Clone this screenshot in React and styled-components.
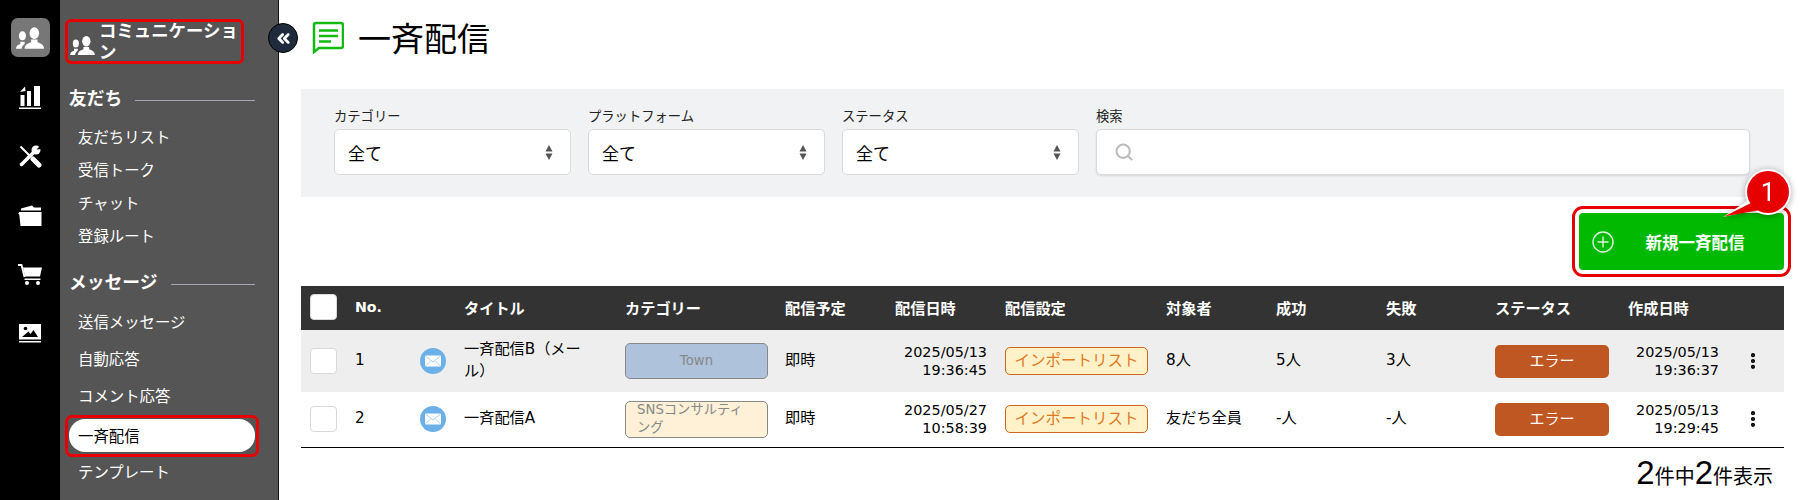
import styled, { createGlobalStyle } from 'styled-components'
import { ChevronsLeft, EllipsisVertical, Search } from 'lucide-react'

const GlobalStyle = createGlobalStyle`
  html, body {
    margin: 0;
    background: #fff;
  }
  body {
    font-family: "DejaVu Sans", "Noto Sans CJK JP", sans-serif;
    color: #000;
  }
  * {
    box-sizing: border-box;
  }
`

const Page = styled.div`
  display: flex;
  height: 500px;
  overflow: hidden;
`

const Rail = styled.nav`
  width: 60px;
  flex: none;
  background: #000;
  padding-top: 8px;
  display: flex;
  flex-flow: column;
  align-items: center;
`

const RailSlot = styled.div`
  height: 59.2px;
  display: flex;
  align-items: center;
  justify-content: center;
`

const RailButton = styled.div`
  width: 39px;
  height: 39px;
  display: flex;
  align-items: center;
  justify-content: center;
  border-radius: 7px;
  color: #fff;
  background: ${props => (props.$active ? '#777' : 'transparent')};
`

const Sidebar = styled.aside`
  position: relative;
  width: 219px;
  flex: none;
  background: #555;
  border-right: 1px solid #111;
  color: #fff;
`

const CollapseButton = styled.div`
  position: absolute;
  top: 23px;
  right: -20px;
  width: 30px;
  height: 30px;
  border-radius: 50%;
  background: #1f2a3c;
  border: 1px solid #000;
  color: #fff;
  display: flex;
  align-items: center;
  justify-content: center;
`

const SectionTitle = styled.div`
  margin: 19px 34px 0 5px;
  height: 45px;
  border: 3px solid #e60000;
  border-radius: 6px;
  display: flex;
  align-items: center;
  gap: 4px;
  padding-left: 2px;
  font-size: 17.4px;
  font-weight: 700;
  line-height: 21px;
`

const SectionIcon = styled.div`
  flex: none;
  display: flex;
  margin-top: 7px;
`

const GroupHeading = styled.div`
  margin: ${props => props.$top}px 23px ${props => props.$bottom}px 9px;
  height: 24px;
  display: flex;
  align-items: center;
  gap: 13px;
  font-size: 17.8px;
  font-weight: 700;
  line-height: 24px;

  &::after {
    content: "";
    flex: 1;
    height: 1px;
    margin-top: 2px;
    background: #a8a8b4;
  }
`

const NavItem = styled.div`
  position: relative;
  margin-left: 9px;
  width: 186px;
  height: ${props => props.$height}px;
  padding: 0 0 2px 9px;
  display: flex;
  align-items: center;
  font-size: 15.4px;

  ${props => props.$active && `
    height: 33px;
    margin-top: 5px;
    margin-bottom: 1px;
    color: #000;
    background: #fff;
    border-radius: 16px;

    &::after {
      content: "";
      position: absolute;
      inset: -4px -4px -5px;
      border: 3px solid #e60000;
      border-radius: 7px;
    }
  `}
`

const Main = styled.main`
  flex: 1;
  min-width: 0;
  padding: 0 18px 0 22px;
`

const PageHeader = styled.header`
  height: 89px;
  padding: 0 0 13px 11px;
  display: flex;
  align-items: center;
  gap: 14px;
`

const PageTitle = styled.h1`
  margin: 4px 0 0;
  font-size: 33px;
  font-weight: 400;
  line-height: 40px;
`

const FilterPanel = styled.section`
  height: 108px;
  padding: 18px 34px 0 33px;
  background: #f1f2f4;
  display: flex;
  gap: 17px;
`

const Field = styled.label`
  display: block;
  width: ${props => props.$width}px;
`

const FieldLabel = styled.div`
  height: 22px;
  font-size: 13.3px;
  line-height: 20px;
  color: #222;
`

const SelectBox = styled.div`
  position: relative;
  height: 46px;
  background: #fff;
  border: 1px solid #d9dade;
  border-radius: 5px;
  display: flex;
  align-items: center;
  padding-left: 13px;
  font-size: 17px;
`

const SortArrows = styled.svg`
  position: absolute;
  right: 17px;
  top: 15px;
`

const SearchBox = styled(SelectBox)`
  padding-left: 17px;
  color: #bbb;
  box-shadow: 0 1px 2px rgba(0, 0, 0, .12);
`

const ActionRow = styled.div`
  height: 89px;
  padding-top: 16px;
  display: flex;
  justify-content: flex-end;
`

const CreateButton = styled.div`
  position: relative;
  width: 205px;
  height: 57px;
  padding-left: 13px;
  display: flex;
  align-items: center;
  background: #00b900;
  border-radius: 4px;
  outline: 3px solid #e60000;
  outline-offset: 4px;
  color: #fff;
  font-size: 16.5px;
  font-weight: 700;
`

const CreateLabel = styled.span`
  flex: 1;
  text-align: center;
  margin-right: 8px;
`

const Callout = styled.svg`
  position: absolute;
  left: 136px;
  top: -48px;
  filter: drop-shadow(0 1px 3px rgba(0, 0, 0, .35));
`

const columns = '45px 65px 44px 161px 160px 110px 110px 161px 110px 110px 109px 133px 117px 38px'

const TableHead = styled.div`
  display: grid;
  grid-template-columns: ${columns};
  align-items: center;
  height: 44px;
  padding: 0 0 2px 9px;
  background: #333;
  color: #fff;
  font-size: 15.2px;
  font-weight: 700;
`

const NumberHead = styled.div`
  font-size: 14.2px;
`

const TableRow = styled.div`
  display: grid;
  grid-template-columns: ${columns};
  align-items: center;
  height: ${props => props.$height}px;
  padding-left: 9px;
  background: ${props => (props.$shaded ? '#eee' : '#fff')};
  font-size: 15.2px;
  line-height: 22px;
`

const TableEnd = styled.div`
  height: 1px;
  margin-top: 1px;
  background: #000;
`

const Checkbox = styled.div`
  width: 27px;
  height: 26px;
  background: #fff;
  border: 1px solid #d7d9de;
  border-radius: 4px;
`

const PlainCell = styled.div`
  margin-top: -2px;
`

const TitleCell = styled(PlainCell)`
  width: 122px;
`

const DateCell = styled.div`
  width: ${props => props.$width}px;
  text-align: right;
  font-size: 14.4px;
  line-height: 18px;
`

const CategoryTag = styled.div`
  width: 143px;
  height: ${props => props.$height}px;
  padding: 0 11px;
  display: flex;
  align-items: center;
  justify-content: center;
  background: ${props => props.$color};
  border: 1px solid #888;
  border-radius: 5px;
  color: #888;
  font-size: 13.3px;
  line-height: 18px;
`

const SettingTag = styled.div`
  width: 143px;
  height: 28px;
  display: flex;
  align-items: center;
  justify-content: center;
  background: #fff2c8;
  border: 1px solid #d0661e;
  border-radius: 5px;
  color: #e07a1f;
  font-size: 15.5px;
`

const StatusButton = styled.div`
  width: 114px;
  height: 33px;
  display: flex;
  align-items: center;
  justify-content: center;
  background: #bf5722;
  border-radius: 5px;
  color: #fff;
  font-size: 15px;
`

const MenuCell = styled.div`
  display: flex;
  margin-left: -2px;
`

const ResultCount = styled.div`
  padding: 8px 11px 0 0;
  text-align: right;
  font-size: 20px;
  line-height: 34px;
`

const CountNumber = styled.span`
  font-family: "Liberation Sans", sans-serif;
  font-size: 33px;
`

const UsersIcon = ({ width = 28, height = 22 }) => (
  <svg width={width} height={height} viewBox="0 0 26 20" fill="currentColor">
    <ellipse cx="17" cy="5.500" rx="4.400" ry="5.500" />
    <path d="M8 20c0-3 2-4.600 6-6v-2.500h6V14c4 1.400 6 3 6 6z" />
    <ellipse cx="6" cy="8" rx="3.200" ry="4.200" />
    <path d="M0 20c0-2.500 1.500-3.600 4-4.500V13.500h4v2c-1.600 1-2.500 2.500-2.800 4.500z" />
  </svg>
)

const ChartIcon = () => (
  <svg width="22" height="27" viewBox="0 0 22 27" fill="currentColor">
    <path d="M1 9l5-5.500 .5 4.500z" />
    <rect x="1.500" y="12" width="4" height="11" />
    <rect x="8" y="8" width="4" height="15" />
    <rect x="15" y="3" width="6" height="20" />
    <rect y="24.500" width="22" height="1.500" />
  </svg>
)

const ToolsIcon = () => (
  <svg width="24" height="24" viewBox="0 0 24 24" fill="none" stroke="currentColor">
    <path d="M2.500 2.500 13 13" strokeWidth="2" />
    <path d="M15 15l6 6" strokeWidth="5" strokeLinecap="round" />
    <path d="M16 8 3.500 20.500" strokeWidth="3.500" strokeLinecap="round" />
    <circle cx="18" cy="6" r="4.500" fill="currentColor" stroke="none" />
    <path d="M18.500 5.500 23 1l1 4z" fill="#000" stroke="none" />
  </svg>
)

const FolderIcon = () => (
  <svg width="24" height="21" viewBox="0 0 24 21" fill="currentColor">
    <path d="M3 3.500 14 0.500l2 2h7v3H3z" />
    <path d="M1 7h22.500v14H2.500z" />
    <path d="M0 8.500 2 7v3z" />
  </svg>
)

const CartIcon = () => (
  <svg width="24" height="21" viewBox="0 0 24 21" fill="currentColor">
    <path d="M0 1h3.500l3 12" fill="none" stroke="currentColor" strokeWidth="1.800" />
    <path d="M5 3.500h19L22 12.500H7z" />
    <rect x="6.500" y="14.500" width="16" height="1.500" />
    <circle cx="9" cy="19" r="2" />
    <circle cx="20" cy="19" r="2" />
  </svg>
)

const ImageIcon = () => (
  <svg width="22" height="20" viewBox="0 0 22 20" fill="currentColor">
    <path fillRule="evenodd" d="M0 0h22v15.500H0zM3 13h16l-4.500-7-3 4-2-2.500z" />
    <circle cx="6.500" cy="4.500" r="1.800" fill="#000" />
    <rect y="17" width="22" height="1.500" />
  </svg>
)

const MessageIcon = () => (
  <svg width="32" height="34" viewBox="0 0 32 34" fill="none" stroke="#12ba12" strokeWidth="2.500">
    <path d="M2 31V4a2 2 0 0 1 2-2h25a2 2 0 0 1 2 2v21a2 2 0 0 1-2 2H7z" />
    <path d="M7 9.500h19M7 15h19M7 20.500h12" strokeWidth="2.500" />
  </svg>
)

const MailIcon = () => (
  <svg width="26" height="26" viewBox="0 0 26 26">
    <circle cx="13" cy="13" r="13" fill="#6bb1e8" />
    <rect x="5" y="7.500" width="16" height="11" rx="1" fill="#fff" />
    <path d="M5.500 8l7.500 6 7.500-6M5.500 18l5.500-5.500M20.500 18 15 12.500" fill="none" stroke="#a9d2f2" strokeWidth="1" />
  </svg>
)

const PlusCircleIcon = () => (
  <svg width="22" height="22" viewBox="0 0 22 22" fill="none" stroke="#dff5df" strokeWidth="1.400">
    <circle cx="11" cy="11" r="10" />
    <path d="M11 5.500v11M5.500 11h11" />
  </svg>
)

const Arrows = () => (
  <SortArrows width="8" height="15" viewBox="0 0 8 15" fill="#555">
    <path d="M4 0l3.500 6.500h-7zM4 15l-3.500-6.500h7z" />
  </SortArrows>
)

const friendLinks = ['友だちリスト', '受信トーク', 'チャット', '登録ルート']
const messageLinks = ['送信メッセージ', '自動応答', 'コメント応答', '一斉配信', 'テンプレート']

const rows = [
  {
    no: 1,
    title: '一斉配信B（メール）',
    category: 'Town',
    categoryColor: '#aec2dc',
    categoryHeight: 36,
    sentDate: '2025/05/13',
    sentTime: '19:36:45',
    target: '8人',
    success: '5人',
    failed: '3人',
    createdDate: '2025/05/13',
    createdTime: '19:36:37',
    height: 62,
    shaded: true,
  },
  {
    no: 2,
    title: '一斉配信A',
    category: 'SNSコンサルティング',
    categoryColor: '#fff0d8',
    categoryHeight: 37,
    sentDate: '2025/05/27',
    sentTime: '10:58:39',
    target: '友だち全員',
    success: '-人',
    failed: '-人',
    createdDate: '2025/05/13',
    createdTime: '19:29:45',
    height: 54,
    shaded: false,
  },
]

const App = () => (
  <Page>
    <GlobalStyle />
    <Rail>
      <RailSlot><RailButton $active><UsersIcon /></RailButton></RailSlot>
      <RailSlot><RailButton><ChartIcon /></RailButton></RailSlot>
      <RailSlot><RailButton><ToolsIcon /></RailButton></RailSlot>
      <RailSlot><RailButton><FolderIcon /></RailButton></RailSlot>
      <RailSlot><RailButton><CartIcon /></RailButton></RailSlot>
      <RailSlot><RailButton><ImageIcon /></RailButton></RailSlot>
    </Rail>
    <Sidebar>
      <CollapseButton><ChevronsLeft size={19} strokeWidth={3.5} /></CollapseButton>
      <SectionTitle>
        <SectionIcon><UsersIcon width={25} height={19} /></SectionIcon>
        <span>コミュニケーション</span>
      </SectionTitle>
      <GroupHeading $top={23} $bottom={9}>友だち</GroupHeading>
      {friendLinks.map(link => <NavItem key={link} $height={33}>{link}</NavItem>)}
      <GroupHeading $top={19} $bottom={8}>メッセージ</GroupHeading>
      {messageLinks.map(link => (
        <NavItem key={link} $height={37} $active={link === '一斉配信'}>{link}</NavItem>
      ))}
    </Sidebar>
    <Main>
      <PageHeader>
        <MessageIcon />
        <PageTitle>一斉配信</PageTitle>
      </PageHeader>
      <FilterPanel>
        <Field $width={237}>
          <FieldLabel>カテゴリー</FieldLabel>
          <SelectBox>全て<Arrows /></SelectBox>
        </Field>
        <Field $width={237}>
          <FieldLabel>プラットフォーム</FieldLabel>
          <SelectBox>全て<Arrows /></SelectBox>
        </Field>
        <Field $width={237}>
          <FieldLabel>ステータス</FieldLabel>
          <SelectBox>全て<Arrows /></SelectBox>
        </Field>
        <Field $width={654}>
          <FieldLabel>検索</FieldLabel>
          <SearchBox><Search size={20} strokeWidth={2.5} /></SearchBox>
        </Field>
      </FilterPanel>
      <ActionRow>
        <CreateButton>
          <PlusCircleIcon />
          <CreateLabel>新規一斉配信</CreateLabel>
          <Callout width="80" height="64" viewBox="0 0 80 64">
            <path d="M8 52 38 32 45 44z" fill="#fff" />
            <circle cx="53" cy="27" r="23" fill="#fff" />
            <path d="M9 51.500 36 38l9 7z" fill="#e60000" />
            <circle cx="53" cy="27" r="21" fill="#e60000" />
            <text x="53" y="36" fill="#fff" fontSize="26" fontWeight="400" textAnchor="middle" fontFamily="Roboto">1</text>
          </Callout>
        </CreateButton>
      </ActionRow>
      <TableHead>
        <Checkbox />
        <NumberHead>No.</NumberHead>
        <div />
        <div>タイトル</div>
        <div>カテゴリー</div>
        <div>配信予定</div>
        <div>配信日時</div>
        <div>配信設定</div>
        <div>対象者</div>
        <div>成功</div>
        <div>失敗</div>
        <div>ステータス</div>
        <div>作成日時</div>
        <div />
      </TableHead>
      {rows.map(row => (
        <TableRow key={row.no} $height={row.height} $shaded={row.shaded}>
          <Checkbox />
          <PlainCell>{row.no}</PlainCell>
          <MailIcon />
          <TitleCell>{row.title}</TitleCell>
          <CategoryTag $color={row.categoryColor} $height={row.categoryHeight}>
            <span>{row.category}</span>
          </CategoryTag>
          <PlainCell>即時</PlainCell>
          <DateCell $width={92}>{row.sentDate}<br />{row.sentTime}</DateCell>
          <SettingTag>インポートリスト</SettingTag>
          <PlainCell>{row.target}</PlainCell>
          <PlainCell>{row.success}</PlainCell>
          <PlainCell>{row.failed}</PlainCell>
          <StatusButton>エラー</StatusButton>
          <DateCell $width={91}>{row.createdDate}<br />{row.createdTime}</DateCell>
          <MenuCell><EllipsisVertical size={20} strokeWidth={3} /></MenuCell>
        </TableRow>
      ))}
      <TableEnd />
      <ResultCount>
        <CountNumber>2</CountNumber>件中<CountNumber>2</CountNumber>件表示
      </ResultCount>
    </Main>
  </Page>
)

export default App
